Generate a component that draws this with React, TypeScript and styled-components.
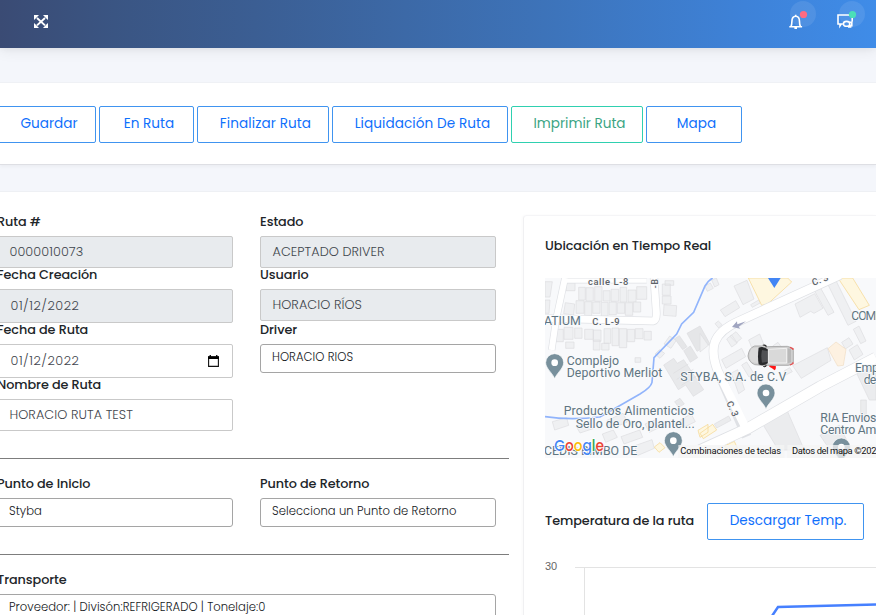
import React from 'react';
import styled, { createGlobalStyle } from 'styled-components';

const Global = createGlobalStyle`
  * { box-sizing: border-box; }
  html, body { margin: 0; height: 615px; overflow: hidden; background: #f4f6fb; }
  body { font-family: Poppins, Inter, sans-serif; color: #212529; }
`;

const Page = styled.div`
  width: 876px;
  height: 615px;
  overflow: hidden;
  display: flex;
  flex-direction: column;
`;

const Header = styled.header`
  flex: none;
  height: 48px;
  display: flex;
  align-items: flex-start;
  background: linear-gradient(90deg, #3a4b74 0%, #3a5583 13%, #3b5e93 29%, #3d73b9 62%, #3e82d8 85%, #3f8ce8 100%);
  box-shadow: 0 1px 15px rgba(0, 0, 0, 0.09), 0 1px 6px rgba(0, 0, 0, 0.04);
`;

const ExpandIcon = styled.svg`
  width: 14px;
  height: 13px;
  margin: 15px 0 0 34px;
`;

const HeaderActions = styled.svg`
  width: 96px;
  height: 48px;
  margin-left: auto;
`;

const Toolbar = styled.section`
  flex: none;
  height: 83px;
  margin-top: 34px;
  padding-top: 23px;
  display: flex;
  align-items: flex-start;
  gap: 3px;
  background: #fff;
  border-top: 1px solid #eff1f5;
  border-bottom: 1px solid #dedfe4;
  box-shadow: 0 2px 3px rgba(0, 0, 0, 0.035);
`;

const Button = styled.button<{ $w: number; $ls?: number; $teal?: boolean }>`
  flex: none;
  width: ${p => p.$w}px;
  height: 37px;
  padding: 0 0 2px 5px;
  background: #fff;
  border: 1px solid ${p => (p.$teal ? '#2fd0b0' : '#4094f0')};
  border-radius: 2px;
  color: ${p => (p.$teal ? '#3ba584' : '#0f70fc')};
  font: 400 13.6px Poppins, Inter, sans-serif;
  letter-spacing: ${p => p.$ls ?? 0}px;
  white-space: nowrap;

  ${Toolbar} &:first-child { margin-left: -3px; }
`;

const Main = styled.main`
  flex: 1;
  margin-top: 26px;
  padding-top: 23px;
  display: flex;
  gap: 14px;
  background: #fff;
  border-top: 1px solid #eef0f4;
`;

const Form = styled.form`
  flex: none;
  width: 512px;
  margin-left: -3px;
`;

const Columns = styled.div`
  display: grid;
  grid-template-columns: 236px 236px;
  column-gap: 27px;
  align-items: start;
`;

const Field = styled.div<{ $gap?: number }>`
  display: flex;
  flex-direction: column;
  margin-top: ${p => p.$gap ?? 0}px;
`;

const Label = styled.label`
  height: 21px;
  line-height: 14px;
  font-size: 12.8px;
  font-weight: 500;
  letter-spacing: -0.08px;
  white-space: nowrap;
`;

const Control = styled.div<{ $date?: boolean; $disabled?: boolean }>`
  height: ${p => (p.$date ? 34 : 32)}px;
  padding: 0 13px 1px ${p => (p.$date ? 12.5 : 11.5)}px;
  display: flex;
  align-items: center;
  justify-content: space-between;
  background: ${p => (p.$disabled ? '#e8ebee' : '#fff')};
  border: 1px solid #c9c9c9;
  border-radius: 2px;
  color: #3f464d;
  font-size: 12.8px;
  font-weight: 300;
  letter-spacing: ${p => (p.$date ? 0.5 : 0.05)}px;
`;

const Select = styled.div`
  height: 29px;
  padding: 0 11px;
  line-height: 24px;
  background: #fff;
  border: 1px solid #a5a5a5;
  border-radius: 3px;
  color: #15181b;
  font-size: 11.6px;
  font-weight: 300;
  letter-spacing: 0.05px;
  white-space: nowrap;
`;

const Divider = styled.hr`
  height: 1px;
  margin: 27px 0 18px;
  border: 0;
  background: #7d7d7d;
`;

const WideField = styled(Field)`
  width: 499px;
`;

const Panel = styled.aside`
  flex: 1;
  min-width: 0;
  padding-left: 21px;
  border-left: 1px solid #f0f0f2;
  border-top: 1px solid #f5f5f7;
  border-top-left-radius: 4px;
  box-shadow: -1px 0 3px rgba(0, 0, 0, 0.025);
  overflow: hidden;
`;

const Title = styled.h2`
  margin: 0;
  font-size: 12.8px;
  line-height: 18px;
  font-weight: 500;
  letter-spacing: -0.06px;
  white-space: nowrap;
`;

const PanelHead = styled.div`
  height: 62px;
  padding-top: 21px;
`;

const MapView = styled.svg`
  display: block;
  width: 331px;
  height: 180px;
  font-family: Roboto, sans-serif;
`;

const TempHead = styled.div`
  margin-top: 45px;
  height: 37px;
  display: flex;
  align-items: center;
  gap: 13px;
`;

const TempTitle = styled(Title)`
  width: 149px;
  padding-bottom: 1px;
`;

const Chart = styled.svg`
  display: block;
  width: 331px;
  height: 75px;
  font: 11px "Liberation Sans", sans-serif;
`;

const house = { fill: '#eff0f2', stroke: '#dcdde0', strokeWidth: 2 };

function Pin({ x, y }: { x: number; y: number }) {
  return (
    <g transform={`translate(${x} ${y})`}>
      <path d="M0 49C-4 33-27 18-27 0a27 27 0 0 1 54 0C27 18 4 33 0 49Z" fill="#78909c" stroke="#fff" strokeWidth="2" />
      <circle r="10" fill="#fff" />
    </g>
  );
}

type PlaceProps = { x: number; y: number; w: number; size?: number; bold?: boolean; children: string };
function Place({ x, y, w, size = 37, bold, children }: PlaceProps) {
  return (
    <text
      x={x} y={y} fontSize={size} textLength={w} fill={bold ? '#5c6267' : '#5f7581'}
      stroke="#f8f9fb" strokeWidth="5" paintOrder="stroke" fontWeight={bold ? 500 : 400}
    >
      {children}
    </text>
  );
}

const Houses = () => (
  <g {...house}>
    <path d="M15 35h22l-7 46H15ZM15 90h15l-3 40H15Z" />
    <path d="M78 38h27v24H78ZM78 30h62v-6H85Z" />
    <path d="M76 98l28 4-3 33-30-4ZM116 52h20v38h-20ZM138 53h22v40h-22ZM164 50h22v44h-22ZM190 62h20v31h-20ZM213 58h23v36h-23ZM240 52h20v44h-20ZM264 60h24v36h-24ZM290 50h30v38h-30Z" />
    <path d="M108 92h24v38h-24ZM134 95h21v42h-21ZM158 96h22v34h-22ZM184 97h20v42h-20ZM207 96h22v38h-22ZM232 98h22v32h-22ZM256 98h22v38h-22ZM280 96h22v30h-22Z" />
    <path d="M367 42h24v34h-24ZM367 78h26v24h-26ZM372 104l38 3-2 32-38-3ZM375 32h26v14h-26Z" />
    <path d="M72 172h27v36H72ZM48 178h22v37H48ZM77 216h25v19H77ZM104 174h22v31h-22ZM134 178h26v30h-26ZM160 180h23v34h-23ZM192 176h20v44h-20ZM216 174h20v53h-20ZM238 176h22v57h-22ZM262 178h22v37h-22ZM286 176h23v30h-23ZM312 184h22v26h-22ZM160 210h20v30h-20ZM185 220h22v20h-22Z" />
    <path d="M285 263h17v14h-17ZM345 252l13-13 16 11-14 15ZM372 222l17-24 20 13-16 24Z" />
    <path d="M404 206l14-9 23 33-13 9ZM441 190l39-22 30 54-39 22ZM431 242l20-14 22 35-22 14Z" fill="#e5e6e8" />
    <path d="M371 285l30-20 11 15 19-11 60 90-31 20-23-34-22 14ZM404 395l16-10 13 17-17 10Z" fill="#e8e9eb" />
    <path d="M400 310l45-28M410 328l50-30M424 346l49-30" />
    <path d="M37 455l43-12 6 23-42 14ZM108 468l40-15 11 23-39 13ZM201 451l48-21 13 26-51 21ZM243 500l56-20 9 22-56 20ZM315 462l29-12 13 23-29 14ZM415 455l38-24 13 24-38 19Z" />
    <path d="M285 527l51-18 7 26-51 22ZM187 492l33-12 12 22-35 15Z" />
  </g>
);

const RightBlocks = () => (
  <g {...house}>
    <path d="M14 48l17-9 9 16-18 9ZM35 30l14-6 8 20-13 7ZM102 48l39-17 21 56-33 17ZM61 120l46-28 12 21-44 27ZM152 104l24-14 6 8-25 14Z" />
    <path d="M285 102l59-31 25 44-27 15-10-6-32 18ZM341 58l18-9 43 78-18 9ZM379 34l24-12 65 132-24 12Z" />
    <path d="M425 217l22-14 12 19-23 15ZM447 240l25-16 17 29-26 17ZM460 178l17-10 21 45-16 8Z" />
    <path d="M146 210l33-18 13 33-33 18ZM80 207l15-12 17 24-17 12ZM90 199l18-14 17 20-16 13ZM65 269l60-34 12 25-59 35ZM94 309l19-10 21 60-18 12ZM125 285l15-9 22 35-15 10Z" />
    <path d="M218 228l16-11 13 18-15 10ZM278 287l104-54 11 38-89 54ZM45 161l10-8 11 11-10 10ZM0 190l25 36-25 20ZM252 303l17-10 8 12-20 10Z" />
    <path d="M183 454l76-38 54 124h-78ZM470 310l58-30v110h-20ZM43 462l43-24 7 13-43 23ZM482 390h17v58h-17ZM360 496l58-30 22 44-50 30Z" fill="#ebecee" />
  </g>
);

function RouteMap() {
  return (
    <MapView viewBox="15 24 993 540">
      <rect x="15" y="24" width="993" height="540" fill="#f8f9fb" />
      <Houses />
      <g transform="translate(480 0)"><RightBlocks /></g>

      <g fill="#fef7e0" stroke="#f4d58b" strokeWidth="2">
        <path d="M625 24h118l12 12-72 66-18 4Z" />
        <path d="M894 24h44l50 82-31 13Z" />
        <path d="M474 481l30-18v24l-24 15ZM480 490l38-27 12 17-40 26Z" />
        <path d="M343 531l17-13 15 15-18 14ZM553 528l30-14 9 20-25 8Z" />
      </g>
      <path d="M864 236l24-20 30 22-8 48-17 2Z" fill="#fdf1e1" stroke="#f0dcc2" strokeWidth="2" />

      <g fill="none" stroke="#dfe1e5" strokeLinejoin="round">
        <path d="M75 24 48 150 35 240" strokeWidth="22" />
        <path d="M70 32H320" strokeWidth="17" />
        <path d="M15 145 340 153Q350 150 349 128L342 24" strokeWidth="25" />
        <path d="M900 15 596 154C515 190 508 235 533 302L620 500" strokeWidth="29" />
        <path d="M480 540 624 475 840 350 1008 263" strokeWidth="35" />
      </g>
      <g fill="none" stroke="#fff" strokeLinejoin="round">
        <path d="M75 24 48 150 35 240" strokeWidth="18" />
        <path d="M70 32H320" strokeWidth="13" />
        <path d="M15 145 340 153Q350 150 349 128L342 24" strokeWidth="21" />
        <path d="M900 15 596 154C515 190 508 235 533 302L620 480" strokeWidth="25" />
        <path d="M470 546 624 475 840 350 1008 263" strokeWidth="31" />
      </g>
      <path d="M15 440Q90 451 180 441L300 372Q333 352 336 337L342 263 410 192 425 162 461 127 495 48Q505 31 518 24" fill="none" stroke="#91b4fb" strokeWidth="5" />
      <path d="m576 171 15-17 1 9 26-9-22 16 5 6Z" fill="#a0a5c0" />
      <path d="M684 24h38l-19 30Z" fill="#4285f4" />

      <Place x={144} y={46} w={121} size={28} bold>calle L-8</Place>
      <Place x={157} y={165} w={82} size={28} bold>C. L-9</Place>
      <g transform="translate(338 50) rotate(-90)"><Place x={-5} y={17} w={28} size={26} bold>-B</Place></g>
      <g transform="translate(559 398) rotate(66)"><Place x={0} y={0} w={48} size={28} bold>C. 3</Place></g>
      <g transform="translate(820 47) rotate(-20)"><Place x={0} y={0} w={50} size={28} bold>C. 3</Place></g>
      <Place x={12} y={166} w={110}>ATIUM</Place>
      <Place x={80} y={285} w={157}>Complejo</Place>
      <Place x={80} y={322} w={287}>Deportivo Merliot</Place>
      <Place x={421} y={332} w={318}>STYBA, S.A. de C.V</Place>
      <Place x={71} y={436} w={391}>Productos Alimenticios</Place>
      <Place x={107} y={474} w={357}>Sello de Oro, plantel...</Place>
      <Place x={12} y={556} w={280}>CEDIS BIMBO DE</Place>
      <Place x={934} y={150} w={176}>COMERCIAL</Place>
      <Place x={945} y={306} w={137}>Empresa</Place>
      <Place x={971} y={343} w={38}>de</Place>
      <Place x={841} y={455} w={168}>RIA Envios</Place>
      <Place x={841} y={492} w={168}>Centro Am</Place>

      <Pin x={44} y={278} />
      <Pin x={400} y={512} />
      <Pin x={678} y={369} />
      <Pin x={904} y={531} />

      <g transform="translate(480 0)">
        <path d="m208 284 20 5-1 8-3 4-8-6-8-5Z" fill="#ff1717" />
        <path d="M164 228 185 228 192 222 200 230 262 229Q276 231 280 241V276Q277 286 264 286L200 286 193 292 187 286 164 284Q146 276 144 258 147 233 164 228Z" fill="#cfcfcf" stroke="#a2a2a2" strokeWidth="2.5" />
        <path d="M155 235 174 232V280L155 276Q142 257 155 235Z" fill="#dadada" />
        <path d="M176 233Q190 227 205 239V278Q190 290 176 283Q172 260 176 233Z" fill="#292a2c" />
        <path d="M186 240 203 243V275L186 278Q182 259 186 240Z" fill="#505154" />
        <path d="M205 238 260 235V279L205 279Z" fill="#d9d9d9" stroke="#f1f1f1" strokeWidth="3" />
        <path d="M263 235 273 238V277L263 280Z" fill="#b9b9b9" />
        <path d="M190 226h8v6M190 289h8v-5" fill="none" stroke="#222" strokeWidth="3" />
        <path d="m270 232 9 4v4M270 285l9-4v-4" fill="none" stroke="#e45050" strokeWidth="4" />
      </g>

      <rect x="415" y="525" width="318" height="39" fill="#f5f5f5" opacity=".76" />
      <rect x="742" y="525" width="266" height="39" fill="#f5f5f5" opacity=".76" />
      <g fill="#111" fontSize="28">
        <text x="421" y="552" textLength="302">Combinaciones de teclas</text>
        <text x="756" y="552" textLength="268">Datos del mapa ©2022</text>
      </g>
      <text x="43" y="543" fontFamily="Poppins, Lato, sans-serif" fontSize="48" fontWeight="500" textLength="149" lengthAdjust="spacingAndGlyphs" stroke="#fff" strokeWidth="5" paintOrder="stroke">
        <tspan fill="#4285f4">G</tspan><tspan fill="#ea4335">o</tspan><tspan fill="#fbbc04">o</tspan><tspan fill="#4285f4">g</tspan><tspan fill="#34a853">l</tspan><tspan fill="#ea4335">e</tspan>
      </text>
    </MapView>
  );
}

const CalendarIcon = () => (
  <svg width="11" height="12" viewBox="0 0 11 12">
    <path d="M.6 2h9.8v9.4H.6Z" fill="none" stroke="#111" strokeWidth="1.1" />
    <path d="M0 1.2h11V4H0ZM1.6 0h1.3v2H1.6ZM8.1 0h1.3v2H8.1Z" fill="#000" />
  </svg>
);

export default function App() {
  return (
    <>
      <Global />
      <Page>
        <Header>
          <ExpandIcon viewBox="0 0 14 13">
            <path d="M3 3l8 7.4M11 3l-8 7.4" stroke="#fff" strokeWidth="1.9" />
            <path d="M0 0h5L3.8 1.3 1.4 3.8 0 5ZM14 0H9l1.2 1.3 2.4 2.5L14 5ZM0 13h5l-1.2-1.3-2.4-2.5L0 8ZM14 13H9l1.2-1.3 2.4-2.5L14 8Z" fill="#fff" />
          </ExpandIcon>
          <HeaderActions viewBox="780 0 96 48">
            <circle cx="803" cy="14" r="13" fill="#fff" opacity=".09" />
            <circle cx="852" cy="14" r="13" fill="#fff" opacity=".09" />
            <g fill="none" stroke="#fff" strokeWidth="1.6">
              <path d="M789.3 26.7h12.8M791 26.2c.8-1.2.9-2.4.9-4.6 0-3.3 1.2-5.3 3.8-5.3s3.8 2 3.8 5.3c0 2.2.1 3.4.9 4.6M795.7 16.2v-1.4M794.4 28.1h2.6" />
              <path d="M842.6 24h-1.4l-1.2 1.8V24h-2V15h14.2v6.6M843.4 24c0-1.8 1.3-2.6 3.2-2.6s3.2.9 3.2 2.5-1.3 2.4-3.2 2.4-3.2-.7-3.2-2.3ZM849.4 22.2h2.4v3.4h-1.2v1.4h-2.6" />
            </g>
            <circle cx="803.5" cy="14.5" r="3.6" fill="#ff6b82" />
            <circle cx="852.5" cy="14.5" r="3.6" fill="#4bdfb8" />
          </HeaderActions>
        </Header>

        <Toolbar>
          <Button $w={99}>Guardar</Button>
          <Button $w={95}>En Ruta</Button>
          <Button $w={132} $ls={0.1}>Finalizar Ruta</Button>
          <Button $w={176} $ls={0.08}>Liquidación De Ruta</Button>
          <Button $w={132} $teal>Imprimir Ruta</Button>
          <Button $w={96} $ls={0.1}>Mapa</Button>
        </Toolbar>

        <Main>
          <Form>
            <Columns>
              <Field>
                <Label>Ruta #</Label>
                <Control $disabled>0000010073</Control>
                <Label>Fecha Creación</Label>
                <Control $disabled $date>01/12/2022</Control>
                <Label>Fecha de Ruta</Label>
                <Control $date>01/12/2022<CalendarIcon /></Control>
                <Label>Nombre de Ruta</Label>
                <Control>HORACIO RUTA TEST</Control>
              </Field>
              <Field>
                <Label>Estado</Label>
                <Control $disabled>ACEPTADO DRIVER</Control>
                <Label>Usuario</Label>
                <Control $disabled>HORACIO RÍOS</Control>
                <Field $gap={2}>
                  <Label>Driver</Label>
                  <Select>HORACIO RIOS</Select>
                </Field>
              </Field>
            </Columns>
            <Divider />
            <Columns>
              <Field>
                <Label>Punto de Inicio</Label>
                <Select>Styba</Select>
              </Field>
              <Field>
                <Label>Punto de Retorno</Label>
                <Select>Selecciona un Punto de Retorno</Select>
              </Field>
            </Columns>
            <Divider />
            <WideField>
              <Label>Transporte</Label>
              <Select>Proveedor: | Divisón:REFRIGERADO | Tonelaje:0</Select>
            </WideField>
          </Form>

          <Panel>
            <PanelHead><Title>Ubicación en Tiempo Real</Title></PanelHead>
            <RouteMap />
            <TempHead>
              <TempTitle>Temperatura de la ruta</TempTitle>
              <Button $w={157}>Descargar Temp.</Button>
            </TempHead>
            <Chart viewBox="545 540 331 75">
              <text x="545" y="570" fill="#666">30</text>
              <path d="M575 567.5H876M584.5 568V615" stroke="#e3e3e3" />
              <path d="M772 616 778 607 876 604.5" fill="none" stroke="#4680ff" strokeWidth="2.5" />
            </Chart>
          </Panel>
        </Main>
      </Page>
    </>
  );
}
